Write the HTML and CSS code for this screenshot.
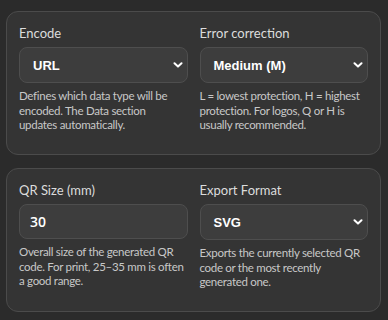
FILE: index.html
```html
<!DOCTYPE html>
<html>
<head>
<meta charset="utf-8">
<link rel="stylesheet" href="styles.css">
</head>
<body>
<div class="page">
  <section class="card">
    <div class="field">
      <label class="label">Encode</label>
      <div class="control select"><span>URL</span><svg class="chev" viewBox="0 0 10 6" width="10" height="6"><path d="M1.5 1.3 L5 4.6 L8.5 1.3" fill="none" stroke="#fff" stroke-width="2" stroke-linecap="round" stroke-linejoin="round"/></svg></div>
      <p class="help">Defines which data type will be encoded. The Data section<br>updates automatically.</p>
    </div>
    <div class="field">
      <label class="label">Error correction</label>
      <div class="control select"><span>Medium (M)</span><svg class="chev" viewBox="0 0 10 6" width="10" height="6"><path d="M1.5 1.3 L5 4.6 L8.5 1.3" fill="none" stroke="#fff" stroke-width="2" stroke-linecap="round" stroke-linejoin="round"/></svg></div>
      <p class="help">L = lowest protection, H = highest protection. For logos, Q or H is usually recommended.</p>
    </div>
  </section>
  <section class="card">
    <div class="field">
      <label class="label">QR Size (mm)</label>
      <div class="control input"><span>30</span></div>
      <p class="help">Overall size of the generated QR code. For print, 25–35 mm is often a good range.</p>
    </div>
    <div class="field">
      <label class="label">Export Format</label>
      <div class="control select"><span>SVG</span><svg class="chev" viewBox="0 0 10 6" width="10" height="6"><path d="M1.5 1.3 L5 4.6 L8.5 1.3" fill="none" stroke="#fff" stroke-width="2" stroke-linecap="round" stroke-linejoin="round"/></svg></div>
      <p class="help">Exports the currently selected QR code or the most recently generated one.</p>
    </div>
  </section>
</div>
</body>
</html>
```
FILE: styles.css
```css
html, body {
  margin: 0;
  padding: 0;
  background: #2b2b2b;
}
body {
  font-family: "Lato", "Open Sans", sans-serif;
}
.page {
  padding: 11px 7px 8px 6px;
  display: flex;
  flex-direction: column;
  gap: 13px;
}
.card {
  background: #343434;
  border: 1px solid #4b4b4b;
  border-radius: 12px;
  padding: 12px;
  height: 144px;
  box-sizing: border-box;
  display: grid;
  grid-template-columns: 1fr 1fr;
  column-gap: 12px;
}
.label {
  display: block;
  font-size: 13px;
  line-height: 18px;
  color: #dcdcdc;
  margin: 0 0 5px;
}
.control {
  height: 36px;
  box-sizing: border-box;
  background: #3d3d3d;
  border: 1px solid #4e4e4e;
  border-radius: 8px;
  display: flex;
  align-items: center;
  color: #ffffff;
  font-weight: 700;
  font-size: 13px;
}
.select {
  padding: 0 4px 0 13px;
  justify-content: space-between;
  font-family: "Liberation Sans", Arial, sans-serif;
}
.input {
  height: 35px;
  padding: 0 10px;
  font-family: "Open Sans", sans-serif;
  font-weight: 600;
  font-size: 14px;
}
.chev {
  display: block;
}
.help {
  margin: 6px 0 0;
  font-size: 11.5px;
  line-height: 14.5px;
  letter-spacing: -0.3px;
  color: #c8c8c8;
}
```
